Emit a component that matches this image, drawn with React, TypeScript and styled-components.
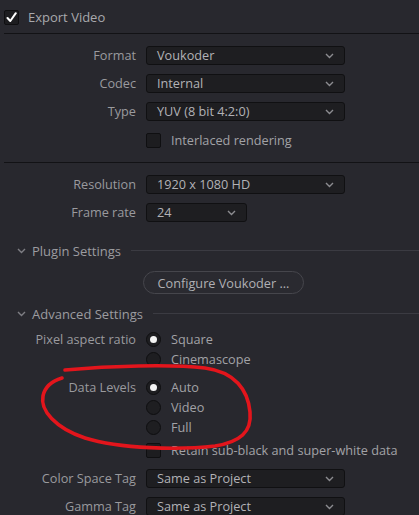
import React from "react";
import styled, { createGlobalStyle } from "styled-components";

const GlobalStyle = createGlobalStyle`
  html, body {
    margin: 0;
    padding: 0;
    background: #28282e;
    overflow: hidden;
  }
  body {
    font-family: "Open Sans", "Noto Sans", sans-serif;
    font-size: 12.7px;
  }
`;

const Panel = styled.div`
  position: relative;
  width: 419px;
  height: 515px;
  background: #28282e;
  color: #9e9ea2;
  display: flex;
  flex-direction: column;
  overflow: hidden;
`;

const ExportHeader = styled.label`
  display: flex;
  align-items: center;
  gap: 9px;
  padding: 10px 0 0 4px;
  height: 15px;
  line-height: 15px;
  color: #a9a9ad;
  font-size: 13px;
`;

const Divider = styled.div<{ $top: number }>`
  height: 0;
  flex: 0 0 auto;
  margin: ${({ $top }) => $top}px 0 0 4px;
  border-top: 1px solid #121215;
`;

const Box = styled.span`
  width: 15px;
  height: 15px;
  box-sizing: border-box;
  border: 1px solid #0f0f11;
  border-radius: 2px;
  background: #1d1d20;
  display: flex;
  align-items: center;
  justify-content: center;
  flex: 0 0 auto;
`;

const Radio = styled.span<{ $on?: boolean }>`
  width: 15px;
  height: 15px;
  box-sizing: border-box;
  border-radius: 50%;
  border: 1px solid #0e0e10;
  background: #1e1e21;
  display: flex;
  align-items: center;
  justify-content: center;
  flex: 0 0 auto;

  &::after {
    content: "";
    display: ${({ $on }) => ($on ? "block" : "none")};
    width: 7px;
    height: 7px;
    border-radius: 50%;
    background: #f4f4f4;
  }
`;

const Field = styled.div<{ $top: number; $h?: number }>`
  display: grid;
  grid-template-columns: 136px 1fr;
  column-gap: 10px;
  align-items: start;
  flex: 0 0 auto;
  margin-top: ${({ $top }) => $top}px;
  line-height: ${({ $h }) => $h ?? 19}px;
`;

const Label = styled.span`
  text-align: right;
  white-space: nowrap;
  color: #9a9a9e;
`;

const Select = styled.div<{ $w: number }>`
  width: ${({ $w }) => $w}px;
  height: 19px;
  box-sizing: border-box;
  border: 1px solid #101012;
  border-radius: 3px;
  background: #1e1e21;
  display: flex;
  align-items: center;
  justify-content: space-between;
  padding: 0 10px 0 10px;
  color: #b2b2b6;
  line-height: 17px;
`;

const Options = styled.div`
  display: flex;
  flex-direction: column;
`;

const Option = styled.div`
  display: flex;
  align-items: center;
  gap: 10px;
  height: 20px;
  color: #a2a2a6;
`;

const SectionHeader = styled.div<{ $top: number }>`
  display: flex;
  align-items: center;
  flex: 0 0 auto;
  height: 18px;
  margin-top: ${({ $top }) => $top}px;
  padding-left: 17px;
  color: #9c9ca0;
  font-size: 13px;

  span {
    margin-left: 6px;
    white-space: nowrap;
  }

  &::after {
    content: "";
    flex: 1;
    height: 0;
    margin: 0 0 2px 10px;
    border-top: 1px solid #3b3b42;
  }
`;

const ButtonRow = styled.div`
  display: flex;
  flex: 0 0 auto;
  margin-top: 11px;
  padding-left: 143px;
`;

const PillButton = styled.button`
  width: 161px;
  height: 23px;
  border: 1px solid #46464c;
  border-radius: 12px;
  background: #2a2a30;
  color: #b0b0b4;
  font-family: "Open Sans", "Noto Sans", sans-serif;
  font-size: 12.7px;
  padding: 0;
`;

const Scribble = styled.svg`
  position: absolute;
  left: 0;
  top: 0;
  pointer-events: none;
`;

const Chevron = ({ color = "#8c8c90" }: { color?: string }) => (
  <svg width="9" height="6" viewBox="0 0 9 6">
    <path d="M1 1 L4.5 4.5 L8 1" fill="none" stroke={color} strokeWidth="1.4" />
  </svg>
);

const Tick = () => (
  <svg width="11" height="11" viewBox="0 0 11 11">
    <path d="M1.5 6 L4.3 9 L9.8 1.2" fill="none" stroke="#ffffff" strokeWidth="2" strokeLinecap="round" strokeLinejoin="round" />
  </svg>
);

function Dropdown({ value, width }: { value: string; width: number }) {
  return (
    <Select $w={width}>
      <span>{value}</span>
      <Chevron />
    </Select>
  );
}

function RadioGroup({ label, options, selected, top }: { label: string; options: string[]; selected: string; top: number }) {
  return (
    <Field $top={top} $h={20}>
      <Label>{label}</Label>
      <Options>
        {options.map((o) => (
          <Option key={o}>
            <Radio $on={o === selected} />
            {o}
          </Option>
        ))}
      </Options>
    </Field>
  );
}

export default function App() {
  return (
    <>
      <GlobalStyle />
      <Panel>
        <ExportHeader>
          <Box>
            <Tick />
          </Box>
          Export Video
        </ExportHeader>
        <Divider $top={8} />

        <Field $top={12}>
          <Label>Format</Label>
          <Dropdown value="Voukoder" width={199} />
        </Field>
        <Field $top={9}>
          <Label>Codec</Label>
          <Dropdown value="Internal" width={199} />
        </Field>
        <Field $top={9}>
          <Label>Type</Label>
          <Dropdown value="YUV (8 bit 4:2:0)" width={199} />
        </Field>
        <Field $top={9}>
          <span />
          <Option>
            <Box />
            Interlaced rendering
          </Option>
        </Field>

        <Divider $top={12} />

        <Field $top={12}>
          <Label>Resolution</Label>
          <Dropdown value="1920 x 1080 HD" width={199} />
        </Field>
        <Field $top={9}>
          <Label>Frame rate</Label>
          <Dropdown value="24" width={101} />
        </Field>

        <SectionHeader $top={20}>
          <Chevron color="#7e7e84" />
          <span>Plugin Settings</span>
        </SectionHeader>
        <ButtonRow>
          <PillButton>Configure Voukoder ...</PillButton>
        </ButtonRow>

        <SectionHeader $top={11}>
          <Chevron color="#7e7e84" />
          <span>Advanced Settings</span>
        </SectionHeader>

        <RadioGroup label="Pixel aspect ratio" options={["Square", "Cinemascope"]} selected="Square" top={6} />
        <RadioGroup label="Data Levels" options={["Auto", "Video", "Full"]} selected="Auto" top={8} />
        <Field $top={3} $h={20}>
          <span />
          <Option>
            <Box />
            Retain sub-black and super-white data
          </Option>
        </Field>
        <Field $top={9}>
          <Label>Color Space Tag</Label>
          <Dropdown value="Same as Project" width={199} />
        </Field>
        <Field $top={9}>
          <Label>Gamma Tag</Label>
          <Dropdown value="Same as Project" width={199} />
        </Field>

        {/* hand-drawn marker around the data levels block */}
        <Scribble width="419" height="515" viewBox="0 0 419 515">
          <path
            d="M65 370 C110 366 170 364 205 368 C235 372 248 390 250 412 C252 432 240 442 215 446 C180 450 120 449 85 438 C55 428 40 410 43 396 C45 386 52 381 62 378"
            fill="none"
            stroke="#e3151c"
            strokeWidth="3.6"
            strokeLinecap="round"
          />
        </Scribble>
      </Panel>
    </>
  );
}
